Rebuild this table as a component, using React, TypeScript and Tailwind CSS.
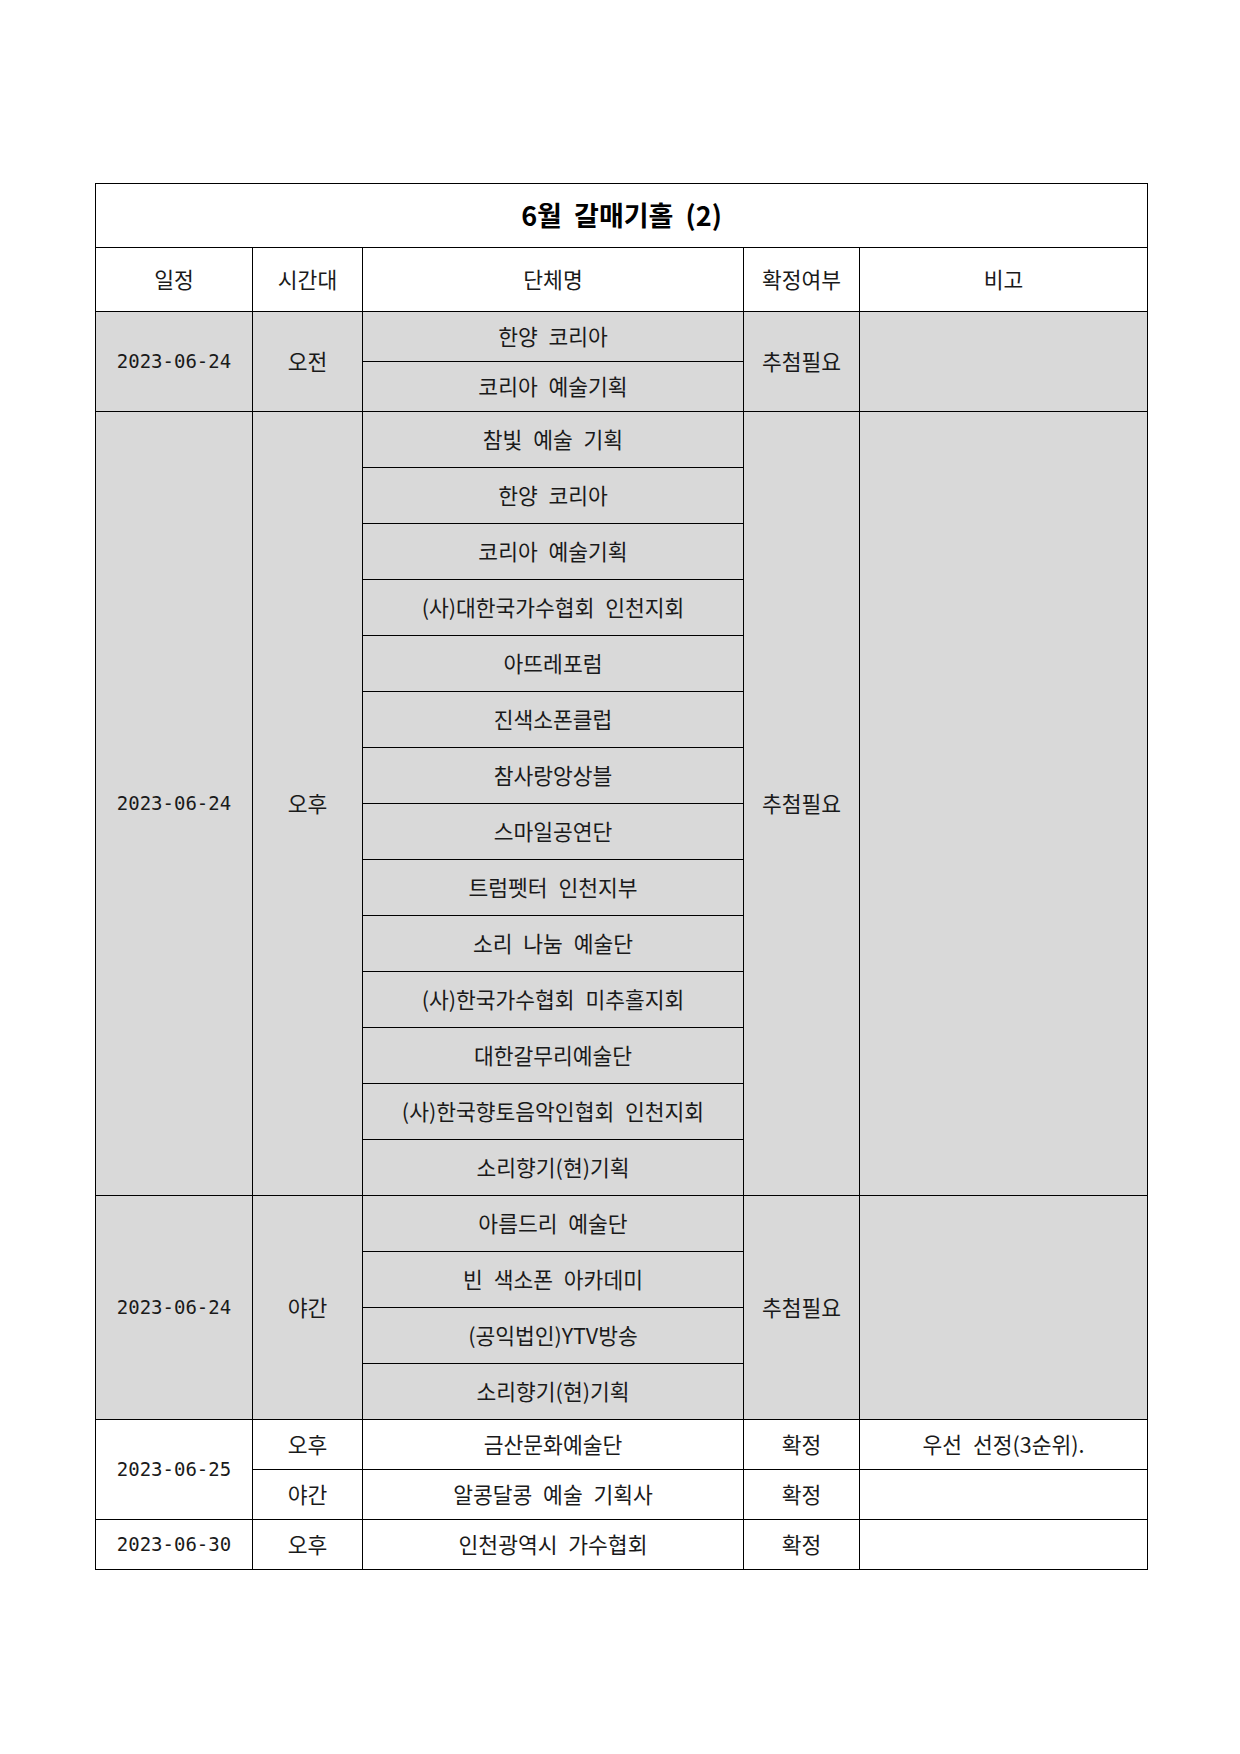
const KR = "font-['Noto_Sans_CJK_KR',sans-serif]"

type Group = {
  date: string
  slot: string
  names: string[]
  status: string
  rowH: string
}

const groups: Group[] = [
  { date: '2023-06-24', slot: '오전', status: '추첨필요', rowH: 'h-[50px]', names: ['한양 코리아', '코리아 예술기획'] },
  {
    date: '2023-06-24', slot: '오후', status: '추첨필요', rowH: 'h-[56px]',
    names: [
      '참빛 예술 기획', '한양 코리아', '코리아 예술기획', '(사)대한국가수협회 인천지회', '아뜨레포럼',
      '진색소폰클럽', '참사랑앙상블', '스마일공연단', '트럼펫터 인천지부', '소리 나눔 예술단',
      '(사)한국가수협회 미추홀지회', '대한갈무리예술단', '(사)한국향토음악인협회 인천지회', '소리향기(현)기획',
    ],
  },
  { date: '2023-06-24', slot: '야간', status: '추첨필요', rowH: 'h-[56px]', names: ['아름드리 예술단', '빈 색소폰 아카데미', '(공익법인)YTV방송', '소리향기(현)기획'] },
]

const cell = 'border border-black text-center align-middle p-0'
const date = "font-['DejaVu_Sans_Mono','Noto_Sans_CJK_KR',monospace] text-[19px]"

export default function App() {
  return (
    <div className={`w-[1240px] h-[1754px] bg-white pt-[183px] pl-[95px] text-[21.5px] text-[#1a1a1a] ${KR}`}>
      <table className="w-[1052px] table-fixed border-collapse">
        <colgroup>
          <col className="w-[157px]" />
          <col className="w-[110px]" />
          <col className="w-[381px]" />
          <col className="w-[116px]" />
          <col className="w-[288px]" />
        </colgroup>
        <tbody>
          <tr className="h-[64px]">
            <td colSpan={5} className={`${cell} text-[27px] font-bold text-black [word-spacing:6px]`}>6월 갈매기홀 (2)</td>
          </tr>
          <tr className="h-[64px]">
            <td className={cell}>일정</td>
            <td className={cell}>시간대</td>
            <td className={cell}>단체명</td>
            <td className={cell}>확정여부</td>
            <td className={cell}>비고</td>
          </tr>
          {groups.map((g, gi) =>
            g.names.map((n, i) => (
              <tr key={`${gi}-${i}`} className={`${g.rowH} bg-[#d9d9d9]`}>
                {i === 0 && (
                  <>
                    <td rowSpan={g.names.length} className={`${cell} ${date}`}>{g.date}</td>
                    <td rowSpan={g.names.length} className={cell}>{g.slot}</td>
                  </>
                )}
                <td className={`${cell} [word-spacing:6px]`}>{n}</td>
                {i === 0 && (
                  <>
                    <td rowSpan={g.names.length} className={cell}>{g.status}</td>
                    <td rowSpan={g.names.length} className={cell}></td>
                  </>
                )}
              </tr>
            ))
          )}
          <tr className="h-[50px]">
            <td rowSpan={2} className={`${cell} ${date}`}>2023-06-25</td>
            <td className={cell}>오후</td>
            <td className={cell}>금산문화예술단</td>
            <td className={cell}>확정</td>
            <td className={`${cell} [word-spacing:6px]`}>우선 선정(3순위).</td>
          </tr>
          <tr className="h-[50px]">
            <td className={cell}>야간</td>
            <td className={`${cell} [word-spacing:6px]`}>알콩달콩 예술 기획사</td>
            <td className={cell}>확정</td>
            <td className={cell}></td>
          </tr>
          <tr className="h-[50px]">
            <td className={`${cell} ${date}`}>2023-06-30</td>
            <td className={cell}>오후</td>
            <td className={`${cell} [word-spacing:6px]`}>인천광역시 가수협회</td>
            <td className={cell}>확정</td>
            <td className={cell}></td>
          </tr>
        </tbody>
      </table>
    </div>
  )
}
